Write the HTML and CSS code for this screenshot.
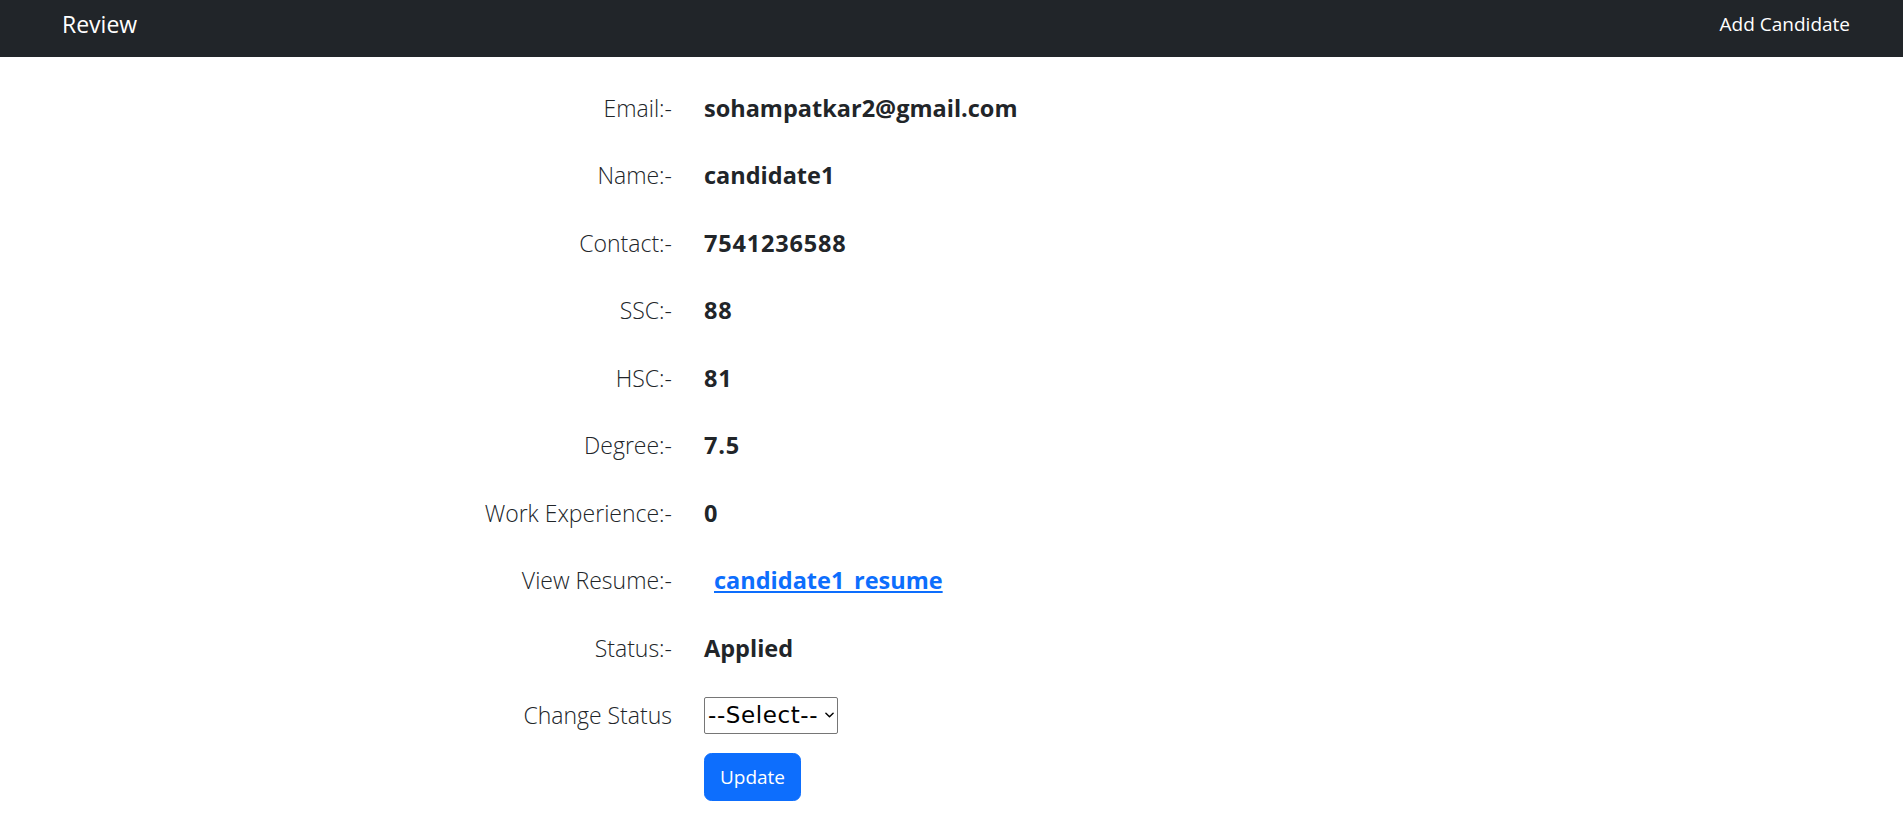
FILE: index.html
```html
<!DOCTYPE html>
<html lang="en">
<head>
<meta charset="utf-8">
<title>Review</title>
<link rel="stylesheet" href="styles.css">
</head>
<body>
<nav class="navbar">
  <a class="brand" href="#">Review</a>
  <a class="nav-link" href="#">Add Candidate</a>
</nav>
<main class="details">
  <div class="row"><span class="label">Email:-</span><span class="value">sohampatkar2@gmail.com</span></div>
  <div class="row"><span class="label">Name:-</span><span class="value">candidate1</span></div>
  <div class="row"><span class="label">Contact:-</span><span class="value number">7541236588</span></div>
  <div class="row"><span class="label">SSC:-</span><span class="value number">88</span></div>
  <div class="row"><span class="label">HSC:-</span><span class="value number">81</span></div>
  <div class="row"><span class="label">Degree:-</span><span class="value number">7.5</span></div>
  <div class="row"><span class="label">Work Experience:-</span><span class="value number">0</span></div>
  <div class="row"><span class="label">View Resume:-</span><span class="value"><a class="resume-link" href="#">candidate1_resume</a></span></div>
  <div class="row"><span class="label">Status:-</span><span class="value">Applied</span></div>
  <div class="row"><label class="label" for="status">Change Status</label><span class="value"><span class="select-wrap"><select id="status" class="status-select"><option>--Select--</option><option>Shortlisted</option><option>Rejected</option></select><svg class="chevron" viewBox="0 0 10 6" width="9" height="6" aria-hidden="true"><path d="M1 1 L5 5 L9 1" fill="none" stroke="#000" stroke-width="1.6" stroke-linecap="round" stroke-linejoin="round"/></svg></span></span></div>
  <div class="actions"><button class="btn-update" type="button">Update</button></div>
</main>
</body>
</html>
```
FILE: styles.css
```css
* { box-sizing: border-box; }
body {
  margin: 0;
  font-family: "Open Sans", "Noto Sans", "Liberation Sans", sans-serif;
  color: #212529;
  background: #fff;
}
.navbar {
  height: 57px;
  background: #212529;
  display: flex;
  align-items: center;
  justify-content: space-between;
  padding: 0 53px 9px 62px;
}
.brand {
  color: #fff;
  font-size: 23px;
  text-decoration: none;
  line-height: 1;
}
.nav-link {
  color: #fff;
  font-size: 19px;
  text-decoration: none;
  line-height: 1;
}
.details {
  padding-top: 17px;
}
.row {
  display: grid;
  grid-template-columns: 672px auto;
  column-gap: 32px;
  height: 67.5px;
  align-items: center;
}
.label {
  text-align: right;
  font-size: 23px;
  font-weight: 300;
  color: #212529;
}
.value {
  font-size: 23.5px;
  font-weight: 700;
  color: #212529;
}
.value.number {
  letter-spacing: 0.8px;
}
.resume-link {
  display: inline-block;
  margin-left: 10px;
  color: #0d6efd;
  text-decoration: underline;
}
.select-wrap {
  position: relative;
  display: inline-block;
  vertical-align: middle;
}
.status-select {
  -webkit-appearance: none;
  appearance: none;
  display: block;
  font-family: "DejaVu Sans", "Open Sans", sans-serif;
  font-size: 23px;
  font-weight: 400;
  letter-spacing: 0.6px;
  height: 37px;
  width: 134px;
  padding: 0 14px 0 3px;
  color: #000;
  background: #fff;
  border: 1px solid #767676;
  border-radius: 2px;
}
.chevron {
  position: absolute;
  right: 4px;
  top: 15px;
  pointer-events: none;
}
.actions {
  margin: 4px 0 0 704px;
}
.btn-update {
  font-family: inherit;
  font-size: 19px;
  color: #fff;
  background: #0d6efd;
  border: 1px solid #0d6efd;
  border-radius: 7.5px;
  height: 48px;
  width: 97px;
  padding: 0;
}
```
